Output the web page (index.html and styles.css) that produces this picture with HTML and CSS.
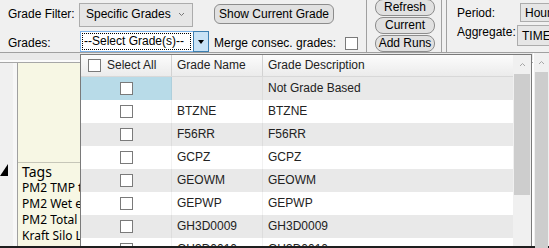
FILE: index.html
```html
<!DOCTYPE html>
<html lang="en">
<head>
  <meta charset="UTF-8" />
  <meta name="viewport" content="width=device-width, initial-scale=1.0"/>
  <title>Grade Selection</title>
  <link rel="stylesheet" href="styles.css">
</head>
<body>
<div class="app">

  <div class="toolbar">
    <div class="grade-group">
      <div class="tb-row row-top">
        <label class="lbl lbl-filter">Grade Filter:</label>
        <div class="select select-filter">
          <span>Specific Grades</span>
          <svg class="chev" width="7" height="5" viewBox="0 0 7 5"><path d="M1 1 L3.5 3.5 L6 1" fill="none" stroke="#777" stroke-width="1"/></svg>
        </div>
        <button class="btn btn-show">Show Current Grade</button>
      </div>
      <div class="tb-row row-bottom">
        <label class="lbl lbl-grades">Grades:</label>
        <div class="combo"><span class="focus">--Select Grade(s)--</span></div>
        <div class="combo-arrow"><span class="tri"></span></div>
        <label class="lbl lbl-merge">Merge consec. grades:</label>
        <span class="chk chk-merge"></span>
      </div>
    </div>
    <div class="sep"></div>
    <div class="run-btns">
      <button class="btn btn-run">Refresh</button>
      <button class="btn btn-run">Current</button>
      <button class="btn btn-run">Add Runs</button>
    </div>
    <div class="sep sep-double"></div>
    <div class="period-group">
      <div class="tb-row">
        <label class="lbl lbl-period">Period:</label>
        <div class="select select-period">Hourly</div>
      </div>
      <div class="tb-row">
        <label class="lbl lbl-agg">Aggregate:</label>
        <div class="select select-agg">TIME_WEIGHTED</div>
      </div>
    </div>
  </div>

  <div class="workspace">
    <div class="main">
      <div class="band"></div>
      <div class="panes">
        <div class="strip">
          <div class="strip-top"></div>
          <svg class="row-mark" width="9" height="14" viewBox="0 0 9 14"><polygon points="8,1 8,13 0,13" fill="#000"/></svg>
        </div>
        <div class="sidebar">
          <div class="side-top"></div>
          <div class="tags-head">Tags</div>
          <div class="tag">PM2 TMP temperature</div>
          <div class="tag">PM2 Wet end flow</div>
          <div class="tag">PM2 Total steam</div>
          <div class="tag">Kraft Silo Level</div>
        </div>
        <div class="content"></div>
      </div>
    </div>
    <div class="vscroll">
      <div class="sb-arrow">
        <svg width="7" height="5" viewBox="0 0 7 5"><path d="M1 4 L3.5 1.5 L6 4" fill="none" stroke="#a6a6a6" stroke-width="1"/></svg>
      </div>
      <div class="sb-thumb sb-thumb-outer"></div>
    </div>
  </div>
  <div class="bottom-line"></div>

  <!-- grade picker dropdown -->
  <div class="popup">
    <div class="grid">
      <div class="grid-head">
        <div class="hcell hcell-check"><span class="chk"></span>Select All</div>
        <div class="hcell">Grade Name</div>
        <div class="hcell">Grade Description</div>
      </div>
      <div class="grid-row alt">
        <div class="cell cell-check selected"><span class="chk"></span></div>
        <div class="cell"></div>
        <div class="cell">Not Grade Based</div>
      </div>
      <div class="grid-row">
        <div class="cell cell-check"><span class="chk"></span></div>
        <div class="cell">BTZNE</div>
        <div class="cell">BTZNE</div>
      </div>
      <div class="grid-row alt">
        <div class="cell cell-check"><span class="chk"></span></div>
        <div class="cell">F56RR</div>
        <div class="cell">F56RR</div>
      </div>
      <div class="grid-row">
        <div class="cell cell-check"><span class="chk"></span></div>
        <div class="cell">GCPZ</div>
        <div class="cell">GCPZ</div>
      </div>
      <div class="grid-row alt">
        <div class="cell cell-check"><span class="chk"></span></div>
        <div class="cell">GEOWM</div>
        <div class="cell">GEOWM</div>
      </div>
      <div class="grid-row">
        <div class="cell cell-check"><span class="chk"></span></div>
        <div class="cell">GEPWP</div>
        <div class="cell">GEPWP</div>
      </div>
      <div class="grid-row alt">
        <div class="cell cell-check"><span class="chk"></span></div>
        <div class="cell">GH3D0009</div>
        <div class="cell">GH3D0009</div>
      </div>
      <div class="grid-row">
        <div class="cell cell-check"><span class="chk"></span></div>
        <div class="cell">GH3D0010</div>
        <div class="cell">GH3D0010</div>
      </div>
    </div>
    <div class="pscroll">
      <div class="sb-arrow">
        <svg width="7" height="5" viewBox="0 0 7 5"><path d="M1 4 L3.5 1.5 L6 4" fill="none" stroke="#a6a6a6" stroke-width="1"/></svg>
      </div>
      <div class="sb-thumb sb-thumb-inner"></div>
    </div>
  </div>

</div>
</body>
</html>
```

FILE: styles.css
```css
* {
  box-sizing: border-box;
}
body {
  margin: 0;
  background: #f0f0f0;
  font: 12px "Liberation Sans", Arial, sans-serif;
  color: #000;
}
.app {
  position: relative;
  width: 549px;
  height: 248px;
  overflow: hidden;
}

/* toolbar */
.toolbar {
  display: flex;
  height: 53px;
  border-bottom: 1px solid #a0a0a0;
}
.tb-row {
  display: flex;
  align-items: flex-start;
}
.lbl {
  flex: none;
  line-height: 14px;
  white-space: nowrap;
}
.grade-group {
  flex: none;
  width: 366px;
  padding-left: 8px;
}
.row-top { height: 29px; }
.row-bottom { height: 23px; }
.lbl-filter { width: 71px; margin-top: 7px; }
.lbl-grades { width: 72px; margin-top: 7px; }
.lbl-merge { width: 131px; margin: 7px 0 0 5px; }

.select {
  display: flex;
  align-items: center;
  background: #e6e6e6;
  border: 1px solid #acacac;
  line-height: 14px;
  white-space: nowrap;
  overflow: hidden;
}
.select-filter {
  flex: none;
  width: 114px;
  height: 24px;
  margin-top: 3px;
  padding: 0 0 2px 6px;
}
.chev {
  margin-left: 7px;
}
.btn {
  font: 12px "Liberation Sans", Arial, sans-serif;
  color: #000;
  background: #e1e1e1;
  border: 1px solid #8c8c8c;
  padding: 0;
  line-height: 14px;
  white-space: nowrap;
}
.btn-show {
  flex: none;
  width: 120px;
  height: 20px;
  margin: 4px 0 0 21px;
  border-radius: 6px;
}

.combo {
  flex: none;
  width: 113px;
  height: 21px;
  margin-top: 2px;
  background: #fff;
  border: 1px solid #7eb4ea;
  border-right: none;
  padding: 1px 2px 1px 1px;
}
.focus {
  display: block;
  height: 17px;
  border: 1px dotted #000;
  padding-left: 1px;
  line-height: 15px;
  white-space: nowrap;
  overflow: hidden;
}
.combo-arrow {
  flex: none;
  display: flex;
  align-items: center;
  justify-content: center;
  width: 16px;
  height: 21px;
  margin-top: 2px;
  background: #c9e3f6;
  border: 1px solid #3c7fb1;
}
.tri {
  width: 0;
  height: 0;
  border-left: 3.5px solid transparent;
  border-right: 3.5px solid transparent;
  border-top: 4px solid #000;
}
.chk {
  display: inline-block;
  flex: none;
  width: 13px;
  height: 13px;
  background: #fff;
  border: 1px solid #7a7a7a;
}
.chk-merge {
  margin-top: 8px;
}

.sep {
  flex: none;
  width: 1px;
  background: #a0a0a0;
}
.sep-double {
  width: 6px;
  margin-left: 6px;
  background: none;
  border-left: 1px solid #a0a0a0;
  border-right: 1px solid #a0a0a0;
}
.run-btns {
  flex: none;
  display: flex;
  flex-direction: column;
  gap: 1px;
  width: 60px;
  margin: -1px 0 0 8px;
}
.btn-run {
  height: 17px;
  border-radius: 8px;
  line-height: 15px;
}

.period-group {
  flex: 1;
  min-width: 0;
  padding-left: 10px;
}
.period-group .tb-row:first-child { height: 24px; }
.lbl-period { width: 63px; margin-top: 6px; }
.lbl-agg { width: 60px; margin-top: 1px; }
.select-period {
  flex: none;
  width: 90px;
  height: 19px;
  margin-top: 3px;
  padding-left: 4px;
}
.select-agg {
  flex: none;
  width: 100px;
  height: 21px;
  margin-top: 1px;
  padding-left: 4px;
}

/* workspace behind the dropdown */
.workspace {
  display: flex;
  height: 193px;
}
.main {
  flex: 1;
  display: flex;
  flex-direction: column;
}
.band {
  height: 10px;
  background: #e9e9e9;
  border-bottom: 1px solid #a7a7a7;
  box-shadow: inset 0 -2px 0 #fbfbfb;
}
.panes {
  flex: 1;
  display: flex;
}
.strip {
  flex: none;
  width: 18px;
  background: #f0f0f0;
  border-right: 1px solid #a0a0a0;
  box-shadow: inset -4px 0 0 #f7f7f7;
}
.strip-top {
  height: 100px;
}
.row-mark {
  display: block;
}
.sidebar {
  flex: none;
  width: 180px;
  background: #f7f7e4;
  font-family: "Noto Sans", "Open Sans", sans-serif;
  white-space: nowrap;
  overflow: hidden;
}
.side-top {
  height: 100px;
  border-bottom: 1px solid #c6c6b8;
}
.tags-head {
  height: 17px;
  padding-left: 4px;
  font-size: 14px;
  line-height: 17px;
}
.tag {
  height: 16px;
  padding-left: 4px;
  font-size: 12px;
  line-height: 16px;
}
.content {
  flex: 1;
  background: #fff;
}
.vscroll {
  flex: none;
  width: 16px;
  background: #f0f0f0;
  border-left: 1px solid #fff;
}
.sb-arrow {
  display: flex;
  align-items: center;
  justify-content: center;
  height: 19px;
}
.sb-thumb {
  background: #cdcdcd;
  margin: 0 1px;
}
.sb-thumb-outer {
  height: 180px;
}
.bottom-line {
  height: 2px;
  background: #1e1e1e;
}

/* dropdown popup */
.popup {
  position: absolute;
  left: 80px;
  top: 54px;
  width: 452px;
  height: 192px;
  display: flex;
  background: #fff;
  border: 1px solid #7a7a7a;
  border-bottom: none;
  overflow: hidden;
}
.grid {
  width: 432px;
}
.grid-head,
.grid-row {
  display: grid;
  grid-template-columns: 91px 91px 250px;
}
.grid-head {
  height: 22px;
  background: linear-gradient(#fcfcfc, #ebebeb);
  border-bottom: 1px solid #d8d8d8;
  color: #222;
}
.hcell {
  display: flex;
  align-items: flex-start;
  padding: 3px 0 0 5px;
  line-height: 14px;
  border-right: 1px solid #d2d2d2;
  white-space: nowrap;
}
.hcell:last-child {
  border-right: none;
}
.hcell-check {
  padding-left: 7px;
}
.hcell-check .chk {
  margin: 1px 6px 0 0;
}
.grid-row {
  height: 23px;
  background: #fff;
  color: #222;
}
.grid-row.alt {
  background: #e9e9e9;
}
.cell {
  padding-left: 5px;
  line-height: 23px;
  border-right: 1px solid rgba(0, 0, 0, 0.05);
  white-space: nowrap;
}
.cell:last-child {
  border-right: none;
}
.cell-check {
  display: flex;
  align-items: center;
  justify-content: center;
  padding-left: 1px;
}
.cell.selected {
  background: #b8dbe8;
}
.pscroll {
  flex: none;
  width: 18px;
  background: #f0f0f0;
}
.sb-thumb-inner {
  height: 121px;
}
```
